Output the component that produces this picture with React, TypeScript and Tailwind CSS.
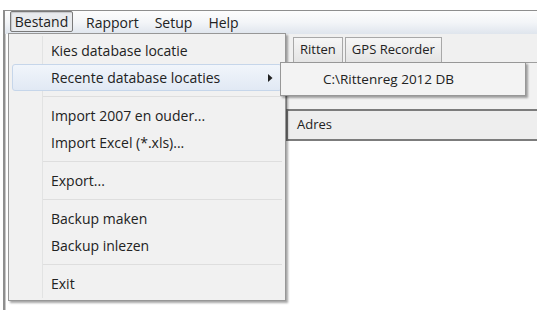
const font = { fontFamily: '"Open Sans", "Noto Sans", sans-serif' };

type Entry = { label: string; sub?: boolean; active?: boolean } | 'sep';

const entries: Entry[] = [
  { label: 'Kies database locatie' },
  { label: 'Recente database locaties', sub: true, active: true },
  'sep',
  { label: 'Import 2007 en ouder...' },
  { label: 'Import Excel (*.xls)...' },
  'sep',
  { label: 'Export...' },
  'sep',
  { label: 'Backup maken' },
  { label: 'Backup inlezen' },
  'sep',
  { label: 'Exit' },
];

function MenuBar() {
  return (
    <div className="flex h-[23px] items-stretch bg-gradient-to-b from-[#fdfdfd] via-[#f3f5f8] to-[#dfe5ed] pl-[5px] text-[14px] text-[#222]">
      <div className="flex h-[21px] w-[63px] items-center justify-center rounded-[2px] border border-[#7a7a7a] bg-[#e9ebee] shadow-[inset_1px_1px_1px_rgba(0,0,0,0.15)]">
        Bestand
      </div>
      <div className="ml-[13px] flex items-center">Rapport</div>
      <div className="ml-[16px] flex items-center">Setup</div>
      <div className="ml-[16px] flex items-center">Help</div>
    </div>
  );
}

function Dropdown() {
  return (
    <div className="absolute left-[8px] top-[33px] flex w-[278px] flex-col border border-[#979797] bg-[#f1f1f1] py-[3px] pr-[3px] pl-[3px] shadow-[2px_2px_2px_rgba(0,0,0,0.35)]">
      <div className="absolute left-[33px] top-[2px] bottom-[2px] w-[2px] border-l border-[#e2e3e3]" />
      {entries.map((e, i) =>
        e === 'sep' ? (
          <div key={i} className="flex h-[11px] items-center pl-[31px]">
            <div className="h-[2px] w-full border-t border-[#dedede]" />
          </div>
        ) : (
          <div
            key={i}
            className={
              'relative flex h-[27px] items-center pl-[38px] text-[14px] text-[#222] ' +
              (e.active
                ? 'rounded-[3px] border border-[#c6d6ea] bg-gradient-to-b from-[#f1f5fb] to-[#e1e9f4]'
                : 'border border-transparent')
            }
          >
            {e.label}
            {e.sub && (
              <svg className="absolute right-[8px]" width="5" height="8" viewBox="0 0 5 8">
                <path d="M0 0 L4.5 4 L0 8 Z" fill="#222" />
              </svg>
            )}
          </div>
        ),
      )}
    </div>
  );
}

function Submenu() {
  return (
    <div className="absolute left-[280px] top-[62px] flex h-[34px] w-[246px] items-center border border-[#979797] bg-[#f3f3f3] pl-[42px] text-[13.5px] text-[#222] shadow-[2px_2px_2px_rgba(0,0,0,0.35)]">
      C:\Rittenreg 2012 DB
    </div>
  );
}

export default function App() {
  return (
    <div className="relative h-[310px] w-[537px] overflow-hidden bg-white pl-[3px] pt-[10px]" style={font}>
      <div className="flex h-full flex-col border-l-2 border-t border-[#8e8e8e]">
        <MenuBar />
        <div className="flex flex-1">
          <div className="w-[281px] border-l border-[#c8c8c8] bg-white" />
          <div className="flex flex-1 flex-col">
            <div className="flex h-[29px] items-end gap-[2px] border-b border-[#9e9e9e] bg-[#f0f0f0] pl-[7px] text-[13px] text-[#222]">
              <div className="flex h-[25px] items-center border border-b-0 border-[#a8a8a8] bg-gradient-to-b from-[#f6f6f6] to-[#e4e4e4] px-[6px]">
                Ritten
              </div>
              <div className="flex h-[25px] items-center border border-b-0 border-[#a8a8a8] bg-gradient-to-b from-[#f6f6f6] to-[#e4e4e4] px-[6px]">
                GPS Recorder
              </div>
            </div>
            <div className="h-[46px] border-l border-[#b0b0b0] bg-[#f2f2f2]" />
            <div className="flex h-[32px] items-center border-y-2 border-l-2 border-[#7c7c7c] bg-[#eeeeee] pl-[9px] text-[13px] text-[#222]">
              Adres
            </div>
            <div className="flex-1 bg-white" />
          </div>
        </div>
      </div>
      <Dropdown />
      <Submenu />
    </div>
  );
}
